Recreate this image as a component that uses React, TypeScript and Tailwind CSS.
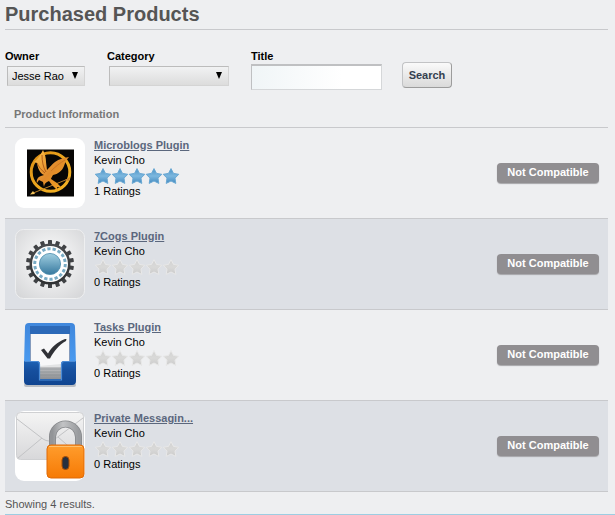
import React from "react";

type Product = {
  name: string;
  author: string;
  ratings: number;
  stars: number;
  icon: React.ReactNode;
};

function MicroblogsIcon() {
  return (
    <svg viewBox="0 0 70 70" className="block h-[70px] w-[70px]" aria-hidden="true">
      <defs>
        <linearGradient id="ring" x1="0" y1="0" x2="1" y2="1">
          <stop offset="0" stopColor="#d98b14" />
          <stop offset="0.4" stopColor="#e9a21c" />
          <stop offset="1" stopColor="#f3b324" />
        </linearGradient>
        <linearGradient id="bird" x1="0" y1="0" x2="1" y2="1">
          <stop offset="0" stopColor="#ffc24a" />
          <stop offset="0.5" stopColor="#e08a2c" />
          <stop offset="1" stopColor="#f6a81c" />
        </linearGradient>
      </defs>
      <rect width="70" height="70" rx="9" fill="#fff" />
      <rect x="12" y="11.500" width="47" height="47" fill="#070605" />
      <circle cx="35.500" cy="34" r="19.300" fill="none" stroke="url(#ring)" strokeWidth="3" />
      <path d="M17 55.500 53 41" stroke="#b8802c" strokeWidth="1" />
      <path d="m15 56.500 5-.5-2-3z" fill="#f4c45c" />
      <path d="m50 42 5-3-1 4z" fill="#c9822a" />
      <path
        d="M28 12c2 4 3 8 3 12l1 8c3-3 5-6 8-8 4-3 9-4 14-5-3 3-4 6-5 9-2 5-6 8-11 9-1 2-2 3-2 4l6 4 5 5-5-1 1 4-6-6-3-4c-3 1-5 3-5 6l-1-5-4-2-2 3c-1-3 1-6 4-7l3-1c-4-2-6-6-7-12l-3-1c3-2 6-6 9-12z"
        fill="url(#bird)"
      />
      <path d="M27 17c0 6 1 12 4 17m-9-9c2 4 4 7 8 10" stroke="#a34e12" strokeWidth="0.800" fill="none" />
      <path d="M36 33c4-4 9-8 14-11" stroke="#c06a1a" strokeWidth="0.600" fill="none" />
    </svg>
  );
}

function CogIcon() {
  const teeth = Array.from({ length: 18 }, (_, i) => i * 20);
  return (
    <svg viewBox="0 0 70 70" className="block h-[70px] w-[70px]" aria-hidden="true">
      <defs>
        <radialGradient id="cog-tile" cx="0.5" cy="0.45" r="0.7">
          <stop offset="0" stopColor="#ffffff" />
          <stop offset="1" stopColor="#d5d6d8" />
        </radialGradient>
        <linearGradient id="cog-dark" x1="0" y1="0" x2="0" y2="1">
          <stop offset="0" stopColor="#4a4c4f" />
          <stop offset="1" stopColor="#2e3032" />
        </linearGradient>
        <linearGradient id="cog-blue" x1="0" y1="0" x2="0" y2="1">
          <stop offset="0" stopColor="#a1cfe1" />
          <stop offset="1" stopColor="#37799f" />
        </linearGradient>
      </defs>
      <rect x="0.500" y="0.500" width="69" height="69" rx="8" fill="url(#cog-tile)" stroke="#eeeff0" />
      {teeth.map((a) => (
        <rect key={a} x="33" y="11" width="4" height="7" rx="0.600" fill="#404245" transform={`rotate(${a} 35 35)`} />
      ))}
      <circle cx="35" cy="35" r="20.500" fill="url(#cog-dark)" />
      <circle cx="35" cy="35" r="18" fill="#fff" />
      <circle cx="35" cy="35" r="15" fill="none" stroke="#79abc4" strokeWidth="3.500" strokeDasharray="3.2 2" />
      <circle cx="35" cy="35" r="13.800" fill="#fff" />
      <circle cx="35" cy="35" r="10.600" fill="url(#cog-blue)" stroke="#4a8bac" strokeWidth="0.800" />
    </svg>
  );
}

function TasksIcon() {
  return (
    <svg viewBox="0 0 70 70" className="block h-[70px] w-[70px]" aria-hidden="true">
      <defs>
        <linearGradient id="tray" x1="0" y1="0" x2="0" y2="1">
          <stop offset="0" stopColor="#3f87dc" />
          <stop offset="1" stopColor="#4b9bf0" />
        </linearGradient>
        <linearGradient id="tray-front" x1="0" y1="0" x2="0" y2="1">
          <stop offset="0" stopColor="#1d62b5" />
          <stop offset="0.4" stopColor="#164f9e" />
          <stop offset="1" stopColor="#0f4490" />
        </linearGradient>
        <linearGradient id="papers" x1="0" y1="0" x2="0" y2="1">
          <stop offset="0" stopColor="#c4c5c7" />
          <stop offset="1" stopColor="#8e9094" />
        </linearGradient>
      </defs>
      <rect x="9" y="63" width="52" height="4" rx="2" fill="#b9bdc3" />
      <path d="M10 7q0-4 4-4h42q4 0 4 4l1 37H9z" fill="url(#tray)" />
      <path d="M15 6h40v38H15z" fill="#123f83" />
      <path d="M15 6h40v8H15z" fill="#2c69b8" />
      <path d="M15.500 14h39v32h-39z" fill="#f7f7f8" />
      <path d="M24 46h23v13H24z" fill="url(#papers)" />
      <path d="M24 46 46 44v3H24z" fill="#e2e3e4" />
      <path d="M24 49h23M24 52h23M24 55h23" stroke="#85898f" strokeWidth="0.600" />
      <path d="M9 41h13q3 0 3 3v15h21V44q0-3 3-3h12v20q0 4-4 4H13q-4 0-4-4z" fill="url(#tray-front)" />
      <path d="M9.500 41.500H22q2.500 0 2.500 3V60h22V44.500q0-3 3-3h11" fill="none" stroke="#4b8bd6" strokeWidth="1.200" />
      <path d="m26 30 3-1.500 4 5c4-7 9-11 17-14.500h1.500l-.5 2c-7 4-12 10-16 17.500h-2.500z" fill="#303136" />
    </svg>
  );
}

function PrivateMessagingIcon() {
  return (
    <svg viewBox="0 0 70 70" className="block h-[70px] w-[70px]" aria-hidden="true">
      <defs>
        <linearGradient id="envelope" x1="0" y1="0" x2="0" y2="1">
          <stop offset="0" stopColor="#f4f4f4" />
          <stop offset="1" stopColor="#d8d8da" />
        </linearGradient>
        <linearGradient id="shackle" x1="0" y1="0" x2="1" y2="0">
          <stop offset="0" stopColor="#939598" />
          <stop offset="0.4" stopColor="#c2c3c5" />
          <stop offset="1" stopColor="#999b9e" />
        </linearGradient>
        <linearGradient id="lock-body" x1="0" y1="0" x2="0" y2="1">
          <stop offset="0" stopColor="#ff9d2d" />
          <stop offset="1" stopColor="#f67a05" />
        </linearGradient>
      </defs>
      <rect width="70" height="70" rx="9" fill="#fff" />
      <rect x="1.500" y="1.500" width="67" height="47" rx="4" fill="url(#envelope)" stroke="#cfd0d2" />
      <path d="m2 8 26 20q6 4 12 0L68 7M3 47l24-20M67 47 43 26" fill="none" stroke="#c2c3c5" strokeWidth="1" />
      <path d="M37.500 36V26a13 13 0 0 1 26 0v10" fill="none" stroke="#85878a" strokeWidth="7" />
      <path d="M37.500 36V26a13 13 0 0 1 26 0v10" fill="none" stroke="url(#shackle)" strokeWidth="5.500" />
      <rect x="32" y="34" width="37" height="33" rx="4" fill="url(#lock-body)" stroke="#df6a08" />
      <path d="M34 35.500h33" stroke="#ffc06d" />
      <rect x="47" y="45.500" width="7" height="13" rx="3.500" fill="#26303f" stroke="#a64d05" />
    </svg>
  );
}

const STAR =
  "M9 .6 11.500 5.400 16.800 6.300 13 10.100 13.800 15.400 9 13 4.200 15.400 5 10.100 1.200 6.300 6.500 5.400z";

function Stars({ value }: { value: number }) {
  return (
    <svg viewBox="0 0 86 16" className="block h-4 w-[86px]" role="img" aria-label={`${value} of 5 stars`}>
      <defs>
        <linearGradient id="star-on" x1="0" y1="0" x2="0" y2="1">
          <stop offset="0" stopColor="#4a90c4" />
          <stop offset="0.5" stopColor="#7db8df" />
          <stop offset="1" stopColor="#4389bf" />
        </linearGradient>
        <linearGradient id="star-off" x1="0" y1="0" x2="0" y2="1">
          <stop offset="0" stopColor="#d2d2d2" />
          <stop offset="0.5" stopColor="#d9d9d8" />
          <stop offset="1" stopColor="#cbcbcb" />
        </linearGradient>
      </defs>
      {[0, 1, 2, 3, 4].map((i) => (
        <path
          key={i}
          d={STAR}
          transform={`translate(${i * 17} 0)`}
          fill={i < value ? "url(#star-on)" : "url(#star-off)"}
          stroke={i < value ? "#6aa8d3" : "#e8e8e8"}
          strokeWidth="1"
          strokeLinejoin="round"
        />
      ))}
    </svg>
  );
}

const products: Product[] = [
  { name: "Microblogs Plugin", author: "Kevin Cho", ratings: 1, stars: 5, icon: <MicroblogsIcon /> },
  { name: "7Cogs Plugin", author: "Kevin Cho", ratings: 0, stars: 0, icon: <CogIcon /> },
  { name: "Tasks Plugin", author: "Kevin Cho", ratings: 0, stars: 0, icon: <TasksIcon /> },
  { name: "Private Messagin...", author: "Kevin Cho", ratings: 0, stars: 0, icon: <PrivateMessagingIcon /> },
];

function FilterSelect({ id, label, option, width }: { id: string; label: string; option: string; width: string }) {
  return (
    <div>
      <label htmlFor={id} className="block text-[11px] leading-[15px] font-bold">
        {label}
      </label>
      <div className={`relative mt-0.5 ml-0.5 ${width}`}>
        <select
          id={id}
          className="block h-5 w-full appearance-none border border-[#d4d4d4] border-t-[#bcbcbc] border-l-[#bcbcbc] bg-linear-to-b from-[#f1f2f3] to-[#dcdcdc] pl-1 text-[11px] text-black"
        >
          <option>{option}</option>
        </select>
        <svg viewBox="0 0 6 7" className="pointer-events-none absolute top-1.5 right-[7px] h-[7px] w-1.5" aria-hidden="true">
          <path d="M0 0h6L3 7z" fill="#000" />
        </svg>
      </div>
    </div>
  );
}

export default function App() {
  return (
    <div className="min-h-screen bg-[#eeeff1] pr-[7px] pl-[5px] font-['Liberation_Sans',Arial,sans-serif] text-[11px] leading-[15px] text-black">
      <h1 className="h-[30px] border-b border-[#c8c9cc] text-xl leading-7 font-bold text-[#555]">Purchased Products</h1>

      <form className="flex items-start pt-[19px]" onSubmit={(e) => e.preventDefault()}>
        <div className="mr-[22px]">
          <FilterSelect id="owner" label="Owner" option="Jesse Rao" width="w-[78px]" />
        </div>
        <div className="mr-[22px]">
          <FilterSelect id="category" label="Category" option="" width="w-[120px]" />
        </div>
        <div className="mr-5">
          <label htmlFor="title" className="block leading-[15px] font-bold">
            Title
          </label>
          <input
            id="title"
            type="text"
            className="block h-[26px] w-[131px] border border-[#d5d7d9] border-t-2 border-t-[#bfc0c2] border-l-[#bfc0c2] bg-linear-to-r from-[#f0f5f7] to-white to-70% px-1"
          />
        </div>
        <button
          type="submit"
          className="mt-[13px] h-[26px] w-[50px] rounded border border-[#c2c3c5] border-r-[#9c9c9c] border-b-[#9c9c9c] bg-linear-to-b from-[#fafafa] to-[#dadada] text-center font-bold text-[#34404f]"
        >
          Search
        </button>
      </form>

      <table className="mt-2.5 w-full border-collapse">
        <thead>
          <tr className="border-b border-[#c8c9cc]">
            <th colSpan={3} scope="col" className="h-[27px] pt-0.5 pl-[9px] text-left font-bold text-[#777]">
              Product Information
            </th>
          </tr>
        </thead>
        <tbody>
          {products.map((p) => (
            <tr key={p.name} className="border-b border-[#c8c9cc] even:bg-[#dde0e5]">
              <td className="w-[89px] py-2.5 pl-2.5 align-top">{p.icon}</td>
              <td className="py-2.5 align-top">
                <a href="#" className="block w-fit font-bold text-[#5b677d] underline">
                  {p.name}
                </a>
                <div>{p.author}</div>
                <Stars value={p.stars} />
                <div>{p.ratings} Ratings</div>
              </td>
              <td className="pr-[9px]">
                <span className="ml-auto block h-5 w-[102px] rounded bg-[#908e91] text-center leading-[19px] font-bold text-white shadow-[0_1px_1px_#a5a5a8]">
                  Not Compatible
                </span>
              </td>
            </tr>
          ))}
        </tbody>
      </table>

      <p className="-mr-[7px] border-b border-[#9dcde2] pt-[5px] pb-0.5 text-[#555]">Showing 4 results.</p>
    </div>
  );
}
